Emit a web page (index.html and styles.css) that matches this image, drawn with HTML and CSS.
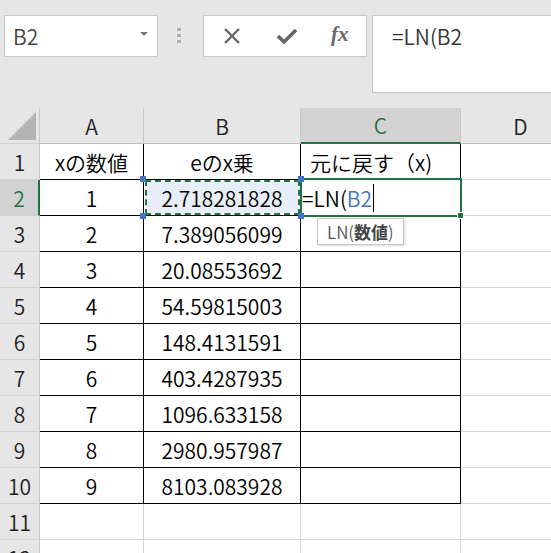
FILE: index.html
```html
<!DOCTYPE html>
<html lang="ja">

<head>
    <meta charset="utf-8">
    <meta name="viewport" content="width=device-width, initial-scale=1.0">
    <title>LN関数</title>
    <link rel="stylesheet" href="styles.css">
</head>

<body>
    <div class="toolbar">
        <div class="namebox">
            <span>B2</span>
            <span class="pil"></span>
        </div>
        <div class="grip"><i></i><i></i><i></i></div>
        <div class="knapper">
            <svg class="ikon" width="20" height="20" viewBox="0 0 20 20">
                <path d="M3 3 L17 17 M17 3 L3 17" stroke="#666" stroke-width="2.4" fill="none"/>
            </svg>
            <svg class="ikon" width="22" height="20" viewBox="0 0 22 20">
                <path d="M2 10 L8 16 L20 4" stroke="#666" stroke-width="3.6" fill="none"/>
            </svg>
            <span class="fx">fx</span>
        </div>
        <div class="formel">=LN(B2</div>
    </div>

    <div class="ark">
        <div class="hj hoved"><span class="trekant"></span></div>
        <div class="kol">A</div>
        <div class="kol">B</div>
        <div class="kol valgt">C</div>
        <div class="kol">D</div>

        <div class="hj">1</div>
        <div class="c b">xの数値</div>
        <div class="c b">eのx乗</div>
        <div class="c b venstre">元に戻す（x)</div>
        <div class="c"></div>

        <div class="hj valgt">2</div>
        <div class="c b">1</div>
        <div class="c b kilde">
            <div class="myrer"></div>
            <span class="greb g1"></span><span class="greb g2"></span>
            <span class="greb g3"></span><span class="greb g4"></span>
            <span class="tal">2.718281828</span>
        </div>
        <div class="c b aktiv">
            <span class="redig">=LN(<span class="ref">B2</span></span><span class="markor"></span>
            <div class="ramme"><span class="fyld"></span></div>
            <div class="tip">LN(<b>数値</b>)</div>
        </div>
        <div class="c"></div>

        <div class="hj">3</div>
        <div class="c b">2</div>
        <div class="c b">7.389056099</div>
        <div class="c b"></div>
        <div class="c"></div>

        <div class="hj">4</div>
        <div class="c b">3</div>
        <div class="c b">20.08553692</div>
        <div class="c b"></div>
        <div class="c"></div>

        <div class="hj">5</div>
        <div class="c b">4</div>
        <div class="c b">54.59815003</div>
        <div class="c b"></div>
        <div class="c"></div>

        <div class="hj">6</div>
        <div class="c b">5</div>
        <div class="c b">148.4131591</div>
        <div class="c b"></div>
        <div class="c"></div>

        <div class="hj">7</div>
        <div class="c b">6</div>
        <div class="c b">403.4287935</div>
        <div class="c b"></div>
        <div class="c"></div>

        <div class="hj">8</div>
        <div class="c b">7</div>
        <div class="c b">1096.633158</div>
        <div class="c b"></div>
        <div class="c"></div>

        <div class="hj">9</div>
        <div class="c b">8</div>
        <div class="c b">2980.957987</div>
        <div class="c b"></div>
        <div class="c"></div>

        <div class="hj">10</div>
        <div class="c b">9</div>
        <div class="c b">8103.083928</div>
        <div class="c b"></div>
        <div class="c"></div>

        <div class="hj">11</div>
        <div class="c"></div>
        <div class="c"></div>
        <div class="c"></div>
        <div class="c"></div>

        <div class="hj">12</div>
        <div class="c"></div>
        <div class="c"></div>
        <div class="c"></div>
        <div class="c"></div>
    </div>
</body>

</html>
```

FILE: styles.css
```css
body {
    margin: 0;
    width: 551px;
    height: 553px;
    overflow: hidden;
    background-color: #e6e6e6;
    font-family: "Noto Sans CJK JP", "Noto Sans", sans-serif;
    font-size: 21px;
    font-weight: 350;
    color: #000;
}

/* formellinje */
.toolbar {
    height: 108px;
    display: flex;
    align-items: flex-start;
    padding-top: 15px;
    box-sizing: border-box;
}

.namebox {
    box-sizing: border-box;
    width: 154px;
    height: 42px;
    margin-left: 4px;
    background-color: #fff;
    border: 1px solid #c6c6c6;
    display: flex;
    align-items: center;
    justify-content: space-between;
    padding: 0 9px 0 8px;
    color: #444;
    line-height: 1;
}

.pil {
    width: 0;
    height: 0;
    border-left: 4px solid transparent;
    border-right: 4px solid transparent;
    border-top: 4px solid #777;
    margin-top: -4px;
}

.grip {
    margin-left: 19px;
    margin-top: 13px;
    display: flex;
    flex-direction: column;
    gap: 3px;
}

.grip i {
    display: block;
    width: 4px;
    height: 3px;
    background-color: #b0b0b0;
}

.knapper {
    box-sizing: border-box;
    width: 164px;
    height: 42px;
    margin-left: 22px;
    background-color: #fff;
    border: 1px solid #c6c6c6;
    display: flex;
    align-items: center;
    padding-left: 18px;
    gap: 34px;
}

.fx {
    font-family: "Liberation Serif", serif;
    font-style: italic;
    font-weight: bold;
    font-size: 21px;
    color: #666;
    margin-left: -1px;
    margin-top: -3px;
}

.formel {
    box-sizing: border-box;
    flex: 1;
    height: 78px;
    margin-left: 5px;
    margin-right: -3px;
    background-color: #fff;
    border: 1px solid #c6c6c6;
    padding: 5px 0 0 19px;
    color: #333;
    line-height: 30px;
}

/* regneark */
.ark {
    display: grid;
    grid-template-columns: 40px 104px 157px 160px 120px;
    grid-template-rows: 36px;
    grid-auto-rows: 36px;
    background-color: #fff;
}

.ark > div {
    box-sizing: border-box;
    display: flex;
    align-items: center;
    justify-content: center;
    white-space: nowrap;
}

.hoved,
.kol {
    background-color: #e6e6e6;
    border-right: 1px solid #c8c8c8;
    border-bottom: 1px solid #bdbdbd;
    color: #222;
}

.hoved {
    position: relative;
}

.trekant {
    position: absolute;
    left: 8px;
    top: 4px;
    width: 0;
    height: 0;
    border-left: 28px solid transparent;
    border-bottom: 28px solid #b4b4b4;
}

.hj {
    background-color: #e6e6e6;
    border-right: 1px solid #c8c8c8;
    border-bottom: 1px solid #d0d0d0;
    color: #222;
}

.kol.valgt {
    background-color: #d2d2d2;
    color: #217346;
    border-bottom: 2px solid #217346;
}

.hj.valgt {
    background-color: #d2d2d2;
    color: #217346;
    border-right: 2px solid #217346;
}

.c {
    border-right: 1px solid #d4d4d4;
    border-bottom: 1px solid #d4d4d4;
}

.c.b {
    border-right-color: #000;
    border-bottom-color: #000;
}

.ark > .venstre {
    justify-content: flex-start;
    padding-left: 9px;
}

.kilde {
    position: relative;
}

.myrer {
    position: absolute;
    top: 0;
    left: 1px;
    right: 0;
    bottom: 0;
    border: 2px dashed #217346;
    background-color: #e8eef8;
    background-clip: padding-box;
}

.tal {
    position: relative;
}

.greb {
    position: absolute;
    width: 6px;
    height: 6px;
    background-color: #4472c4;
    z-index: 2;
}

.g1 { left: -4px; top: -4px; }
.g2 { left: -4px; bottom: -4px; }
.g3 { right: -4px; top: -4px; }
.g4 { right: -4px; bottom: -4px; }

.aktiv.c {
    position: relative;
    justify-content: flex-start;
    padding-left: 1px;
}

.ref {
    color: #4472c4;
}

.markor {
    width: 1px;
    height: 28px;
    background-color: #000;
    margin-left: 1px;
}

.ramme {
    position: absolute;
    left: -1px;
    top: -2px;
    right: -2px;
    bottom: -2px;
    border: 2px solid #217346;
}

.fyld {
    position: absolute;
    right: -4px;
    bottom: -4px;
    width: 5px;
    height: 5px;
    background-color: #217346;
    border: 1px solid #fff;
}

.tip {
    position: absolute;
    left: 16px;
    top: 38px;
    height: 27px;
    padding: 0 9px;
    box-sizing: border-box;
    background-color: #fff;
    border: 1px solid #c8c8c8;
    box-shadow: 1px 1px 2px rgba(0, 0, 0, 0.15);
    font-size: 17px;
    line-height: 25px;
    color: #555;
    z-index: 3;
}

.tip b {
    font-weight: 700;
    color: #444;
}
```
